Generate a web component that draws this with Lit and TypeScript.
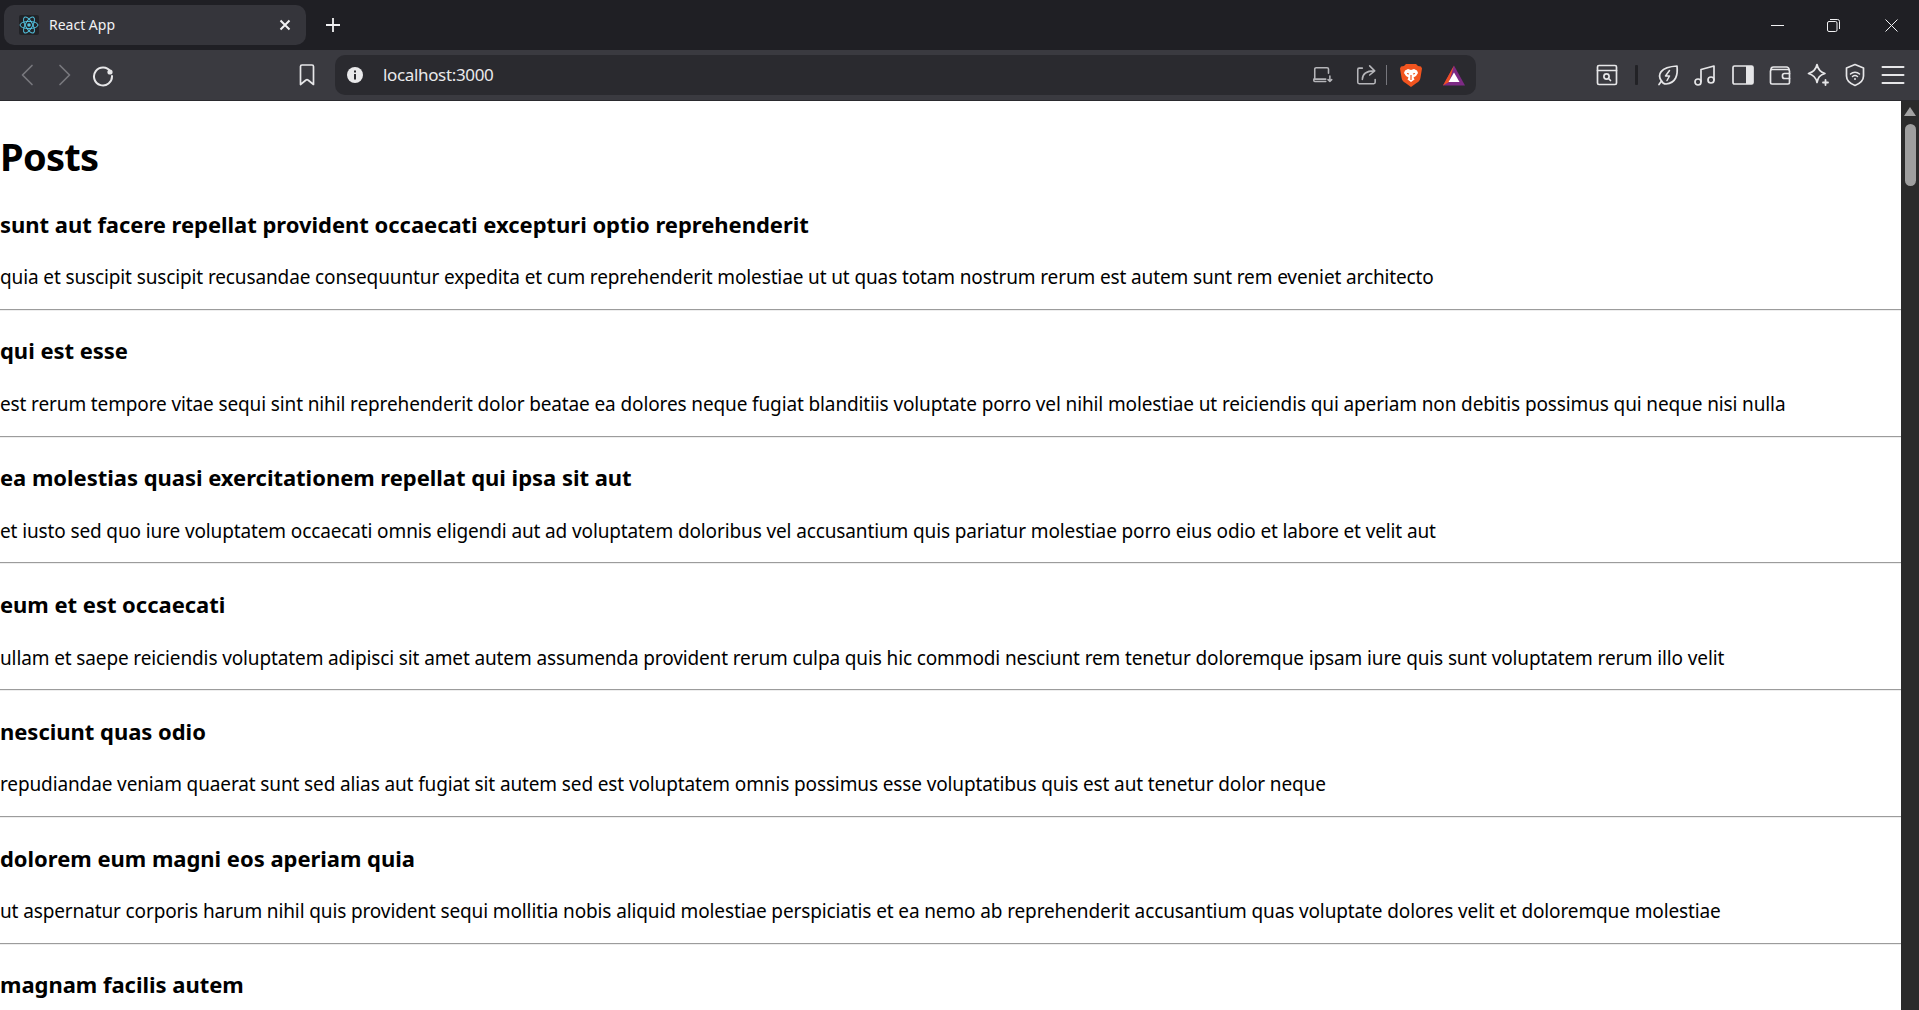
import { LitElement, html, css, svg } from 'lit';
import { customElement } from 'lit/decorators.js';

const posts = [
	{ title: 'sunt aut facere repellat provident occaecati excepturi optio reprehenderit', body: 'quia et suscipit suscipit recusandae consequuntur expedita et cum reprehenderit molestiae ut ut quas totam nostrum rerum est autem sunt rem eveniet architecto' },
	{ title: 'qui est esse', body: 'est rerum tempore vitae sequi sint nihil reprehenderit dolor beatae ea dolores neque fugiat blanditiis voluptate porro vel nihil molestiae ut reiciendis qui aperiam non debitis possimus qui neque nisi nulla' },
	{ title: 'ea molestias quasi exercitationem repellat qui ipsa sit aut', body: 'et iusto sed quo iure voluptatem occaecati omnis eligendi aut ad voluptatem doloribus vel accusantium quis pariatur molestiae porro eius odio et labore et velit aut' },
	{ title: 'eum et est occaecati', body: 'ullam et saepe reiciendis voluptatem adipisci sit amet autem assumenda provident rerum culpa quis hic commodi nesciunt rem tenetur doloremque ipsam iure quis sunt voluptatem rerum illo velit' },
	{ title: 'nesciunt quas odio', body: 'repudiandae veniam quaerat sunt sed alias aut fugiat sit autem sed est voluptatem omnis possimus esse voluptatibus quis est aut tenetur dolor neque' },
	{ title: 'dolorem eum magni eos aperiam quia', body: 'ut aspernatur corporis harum nihil quis provident sequi mollitia nobis aliquid molestiae perspiciatis et ea nemo ab reprehenderit accusantium quas voluptate dolores velit et doloremque molestiae' },
	{ title: 'magnam facilis autem', body: '' },
];

// 24x24 toolbar icons
const icon = (body: unknown) => html`<svg class="icon" viewBox="0 0 24 24" fill="none" stroke="currentColor" stroke-width="1.7" stroke-linecap="round" stroke-linejoin="round">${body}</svg>`;

const icons = {
	back: svg`<path d="M17 2.5 7.5 12l9.500 9.500"/>`,
	forward: svg`<path d="M7 2.500 16.500 12 7 21.500"/>`,
	reload: svg`<path d="M19.500 8.500A9 9 0 1 0 21 13" stroke-width="2"/><circle cx="19" cy="9" r="2.600" fill="currentColor" stroke="none"/>`,
	bookmark: svg`<path d="M5.500 3.500a1.500 1.500 0 0 1 1.500-1.500h10a1.500 1.500 0 0 1 1.500 1.500v18l-5.500-4.500a1.500 1.500 0 0 0-2 0l-5.500 4.500z"/>`,
	device: svg`<path d="M18 10V5.500a1.500 1.500 0 0 0-1.500-1.500H4.500A1.500 1.500 0 0 0 3 5.500v11"/><path d="M2 16.500h13M2 16.500v1.500a1 1 0 0 0 1 1h12"/><path d="M19.500 13v6M17.500 17l2 2 2-2"/>`,
	share: svg`<path d="M8 4.500H4.500A1.500 1.500 0 0 0 3 6v14a1.500 1.500 0 0 0 1.500 1.500h16a1.500 1.500 0 0 0 1.500-1.500v-3"/><path d="M8 17c0-6 4-9.500 13-9.500M16 2l5.500 5.500L16 12"/>`,
	reader: svg`<rect x="2.500" y="2.500" width="19" height="19" rx="1.500"/><path d="M2.500 7.500h19"/><circle cx="11.500" cy="13.500" r="2.600"/><path d="m13.500 15.500 2 2"/>`,
	leaf: svg`<path d="M5.500 18C1 12 4 4 21 3c1 9-1 17-11 18-2 0-3.500-1-4.500-3z"/><path d="M5.500 18 3 21.500"/><path d="M13.500 7.500 9.500 13h4l-2.500 4.500" stroke-width="1.500"/>`,
	music: svg`<path d="M8 18.500V6.500L21 3v14"/><circle cx="5" cy="19" r="3"/><circle cx="18" cy="17" r="3"/>`,
	sidebar: svg`<rect x="2" y="3" width="20" height="18" rx="1.500"/><rect x="15" y="3" width="7" height="18" fill="currentColor" stroke="none"/>`,
	wallet: svg`<path d="M3 6.500A2.500 2.500 0 0 1 5.500 4h13A2.500 2.500 0 0 1 21 6.500"/><rect x="2.500" y="6.500" width="19" height="14.500" rx="1.500"/><path d="M21.500 10.500h-5a2 2 0 0 0-2 2v1a2 2 0 0 0 2 2h5"/>`,
	stars: svg`<path d="M12 2.500c1 5 3 7.500 8 9-5.500 1.500-7 4-8 9-1-5-3-7.500-8.500-9C8.500 10 11 7.500 12 2.500z" transform="translate(-1 -1)"/><path d="M19.500 17v5M17 19.500h5" stroke-width="1.800"/>`,
	shield: svg`<path d="M12 1.500 20.500 5v8c0 4.500-3.500 7.500-8.500 9.500C7 20.500 3.500 17.500 3.500 13V5z"/><path d="M7.500 11c2.500-2.500 6.500-2.500 9 0M9.500 13.500c1.500-1.200 3.500-1.200 5 0" stroke-width="1.500"/><circle cx="12" cy="16" r="1" fill="currentColor" stroke="none"/>`,
	menu: svg`<path d="M1.500 4h21M1.500 12h21M1.500 20h21" stroke-width="2"/>`,
};

@customElement('app-root')
export class AppRoot extends LitElement {
	static styles = css`
		:host {
			display: flex;
			flex-direction: column;
			height: 100vh;
			overflow: hidden;
			background: #fff;
			font-family: 'Noto Sans', sans-serif;
		}

		/* Tab strip */
		.tabstrip {
			display: flex;
			align-items: center;
			height: 50px;
			flex: none;
			padding-left: 4px;
			background: #1f1f24;
			color: #f1f1f3;
		}
		.tab {
			display: flex;
			align-items: center;
			box-sizing: border-box;
			width: 302px;
			height: 40px;
			padding: 0 15px;
			border-radius: 10px;
			background: #35353b;
		}
		.favicon {
			width: 20px;
			height: 20px;
			flex: none;
			border-radius: 2px;
			background: #222327;
		}
		.tab-title {
			flex: 1;
			margin: 0 0 2px 10px;
			font-size: 14px;
		}
		.tab-close {
			width: 12px;
			height: 12px;
			flex: none;
		}
		.newtab {
			width: 14px;
			height: 14px;
			margin-left: 20px;
		}
		.window-controls {
			display: flex;
			align-items: center;
			margin-left: auto;
			gap: 43px;
			padding-right: 21px;
		}
		.window-controls svg {
			width: 13px;
			height: 13px;
		}
		.window-controls svg:last-child {
			margin-left: 2.500px;
		}

		/* Toolbar */
		.toolbar {
			display: flex;
			align-items: center;
			height: 50px;
			flex: none;
			padding-left: 15px;
			background: #3a3a40;
			color: #e6e6e8;
			border-bottom: 1px solid #2a2a2e;
		}
		.icon {
			display: block;
			width: 24px;
			height: 24px;
			flex: none;
		}
		.group {
			display: flex;
			align-items: center;
			gap: 13.500px;
		}
		.nav {
			gap: 14px;
		}
		.dim {
			color: #77777d;
		}
		.bookmark {
			margin-left: 179.500px;
		}
		.address {
			display: flex;
			align-items: center;
			box-sizing: border-box;
			width: 1141px;
			height: 40px;
			margin-left: 16.500px;
			padding-left: 12px;
			border-radius: 10px;
			background: #2a2a2f;
			color: #e9e9eb;
		}
		.info {
			width: 16px;
			height: 16px;
			flex: none;
		}
		.url {
			flex: 1;
			margin: 0 0 1px 20px;
			font-size: 17px;
			letter-spacing: -0.350px;
		}
		.address .group {
			gap: 21px;
			padding-right: 11.500px;
			color: #b5b5b9;
		}
		.address .icon {
			width: 22px;
			height: 22px;
		}
		.sep {
			width: 1px;
			height: 20px;
			margin: 0 -8px 0 -12px;
			background: #77777d;
		}
		.brand {
			display: block;
			width: 22px;
			height: 23px;
		}
		.extensions {
			margin-left: auto;
			padding-right: 14.500px;
		}
		.toolbar-sep {
			width: 3px;
			height: 20px;
			margin: 0 4px 0 3px;
			border-radius: 1px;
			background: #222226;
		}

		/* Page */
		.viewport {
			display: flex;
			flex: 1;
			min-height: 0;
		}
		.page {
			flex: 1;
			min-width: 0;
			overflow: hidden;
			color: #000;
		}
		h1 {
			margin: 28.800px 0 25.800px;
			font-size: 38px;
			line-height: 53px;
			font-weight: 700;
			letter-spacing: -0.700px;
		}
		h3 {
			margin: 24.600px 0 24.700px;
			font-size: 22px;
			line-height: 31px;
			font-weight: 700;
			letter-spacing: -0.030px;
		}
		p {
			margin: 0 0 17.500px;
			font-size: 19px;
			line-height: 27px;
			letter-spacing: -0.125px;
			white-space: nowrap;
		}
		hr {
			margin: 10px 0 11px;
			height: 0;
			border: none;
			border-top: 1px solid #9c9c9c;
			border-bottom: 1px solid #eee;
		}
		.scrollbar {
			display: flex;
			flex-direction: column;
			align-items: center;
			width: 18px;
			flex: none;
			padding-top: 6px;
			background: #2b2b2b;
		}
		.scroll-arrow {
			width: 0;
			height: 0;
			border-left: 6px solid transparent;
			border-right: 6px solid transparent;
			border-bottom: 9px solid #a3a3a3;
		}
		.thumb {
			width: 11px;
			height: 62px;
			margin-top: 8px;
			border-radius: 6px;
			background: #9f9f9f;
		}
	`;

	private renderChrome() {
		return html`
			<div class="tabstrip">
				<div class="tab">
					<svg class="favicon" viewBox="0 0 20 20" fill="none" stroke="#53c1de" stroke-width="1">
						<ellipse cx="10" cy="10" rx="9" ry="3.600"/>
						<ellipse cx="10" cy="10" rx="9" ry="3.600" transform="rotate(60 10 10)"/>
						<ellipse cx="10" cy="10" rx="9" ry="3.600" transform="rotate(120 10 10)"/>
						<circle cx="10" cy="10" r="1.800" fill="#53c1de" stroke="none"/>
					</svg>
					<span class="tab-title">React App</span>
					<svg class="tab-close" viewBox="0 0 12 12" stroke="currentColor" stroke-width="2"><path d="M1.500 1.500l9 9M10.500 1.500l-9 9"/></svg>
				</div>
				<svg class="newtab" viewBox="0 0 14 14" stroke="currentColor" stroke-width="1.800"><path d="M7 0v14M0 7h14"/></svg>
				<div class="window-controls">
					<svg viewBox="0 0 13 13" stroke="currentColor" fill="none"><path d="M0 6.500h13"/></svg>
					<svg viewBox="0 0 13 13" stroke="currentColor" fill="none"><rect x="0.500" y="2.500" width="9.500" height="10" rx="1.500"/><path d="M3 .5h7.500a2 2 0 0 1 2 2V10"/></svg>
					<svg viewBox="0 0 13 13" stroke="currentColor" fill="none"><path d="M.5.500l12 12M12.500.500l-12 12"/></svg>
				</div>
			</div>
			<div class="toolbar">
				<div class="group nav">
					<span class="dim">${icon(icons.back)}</span>
					<span class="dim">${icon(icons.forward)}</span>
					${icon(icons.reload)}
				</div>
				<div class="bookmark">${icon(icons.bookmark)}</div>
				<div class="address">
					<svg class="info" viewBox="0 0 16 16"><circle cx="8" cy="8" r="8" fill="#e9e9eb"/><path d="M7 7h2v5.500H7zM7 3.500h2v2H7z" fill="#2a2a2f"/></svg>
					<span class="url">localhost:3000</span>
					<div class="group">
						${icon(icons.device)}
						${icon(icons.share)}
						<span class="sep"></span>
						<svg class="brand" viewBox="0 0 22 23">
							<path d="M6 0h10l2 2 3 0.500 1 2-1.500 9c-.5 3-1.500 4-4 5.500L11 23l-5.500-4C3 17.500 2 16.500 1.500 13.500L0 4.500l1-2L4 2z" fill="#f1541f"/>
							<path d="M5 6.500 8 5l3 1 3-1 3 1.500 1 2.500-2 3-2.500 1.500 1 2-3.500 2.500L7.500 15.500l1-2L6 12 4 9z" fill="#fff"/>
							<path d="M7 9.500l2 .5M15 9.500l-2 .5M11 11v5" stroke="#f1541f" stroke-width="1.200"/>
						</svg>
						<svg class="brand" viewBox="0 0 22 20">
							<path d="M11 0 0 20h22z" fill="#7d2a85"/>
							<path d="M11 0 0 20l6-3.500z" fill="#f04e23"/>
							<path d="M11 7 5.500 16.500h11z" fill="#fff"/>
						</svg>
					</div>
				</div>
				<div class="group extensions">
					${icon(icons.reader)}
					<span class="toolbar-sep"></span>
					${icon(icons.leaf)}
					${icon(icons.music)}
					${icon(icons.sidebar)}
					${icon(icons.wallet)}
					${icon(icons.stars)}
					${icon(icons.shield)}
					${icon(icons.menu)}
				</div>
			</div>
		`;
	}

	render() {
		return html`
			${this.renderChrome()}
			<div class="viewport">
				<main class="page">
					<h1>Posts</h1>
					${posts.map(post => html`
						<article>
							<h3>${post.title}</h3>
							${post.body ? html`<p>${post.body}</p><hr />` : ''}
						</article>
					`)}
				</main>
				<div class="scrollbar">
					<div class="scroll-arrow"></div>
					<div class="thumb"></div>
				</div>
			</div>
		`;
	}
}
